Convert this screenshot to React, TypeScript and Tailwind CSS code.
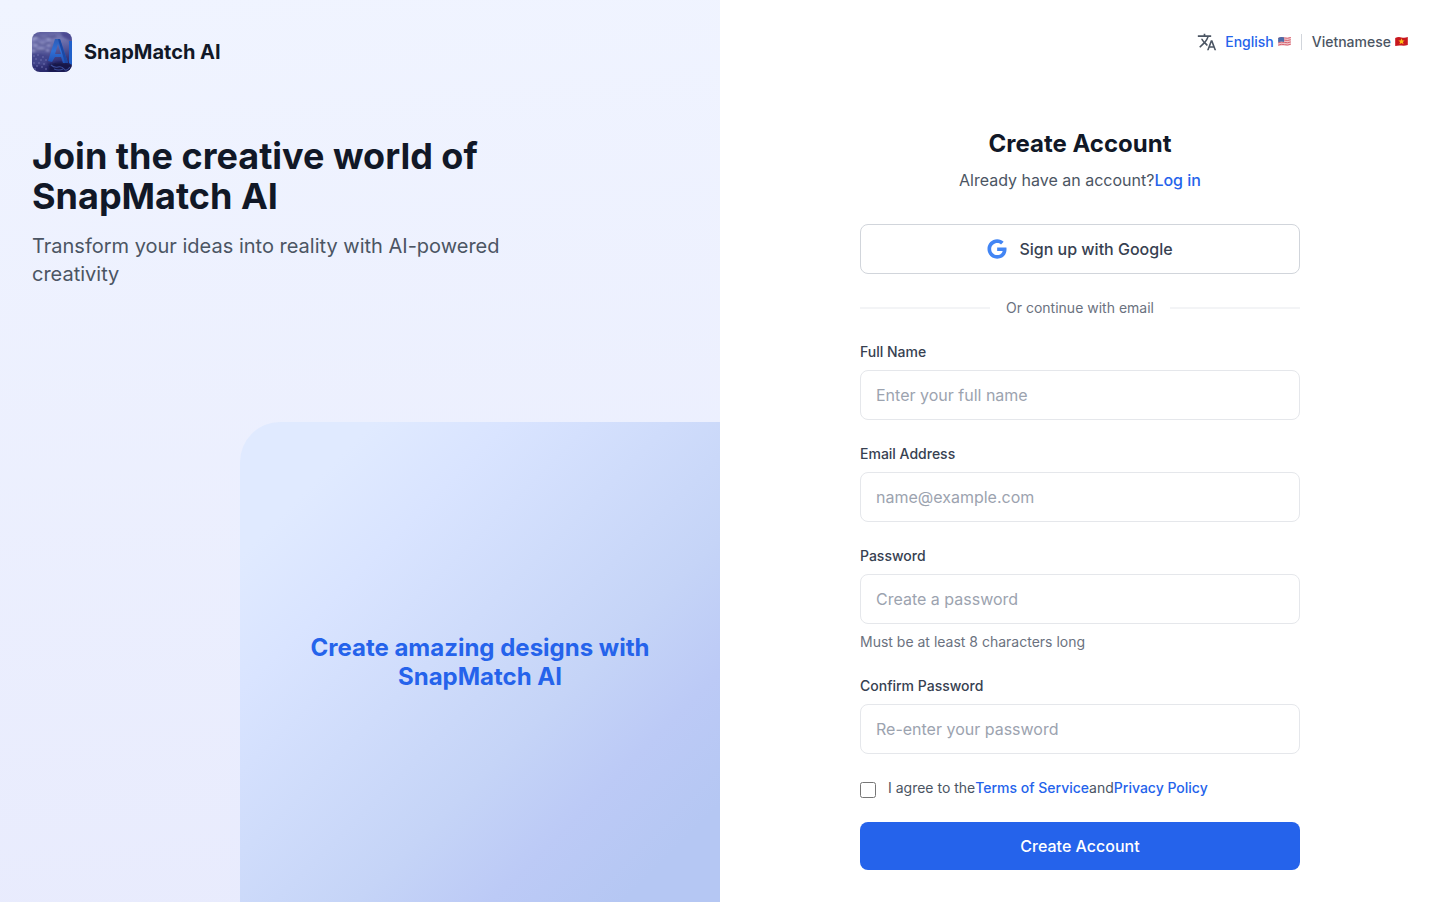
import { FaGoogle } from "react-icons/fa";
import { MdTranslate } from "react-icons/md";

function LogoMark() {
  return (
    <svg viewBox="0 0 40 40" className="size-10 shrink-0 rounded-lg" aria-hidden="true">
      <defs>
        <linearGradient id="sky" x1="0" y1="0" x2="0.2" y2="1">
          <stop offset="0" stopColor="#5a5a9c" />
          <stop offset="0.3" stopColor="#7678b2" />
          <stop offset="0.55" stopColor="#56589a" />
          <stop offset="0.8" stopColor="#34357a" />
          <stop offset="1" stopColor="#2a2a6c" />
        </linearGradient>
        <linearGradient id="letter" x1="0" y1="0" x2="0" y2="1">
          <stop offset="0" stopColor="#2c5cb8" />
          <stop offset="0.5" stopColor="#3070d6" />
          <stop offset="1" stopColor="#1f50b4" />
        </linearGradient>
        <filter id="soft">
          <feGaussianBlur stdDeviation="0.9" />
        </filter>
      </defs>
      <rect width="40" height="40" fill="url(#sky)" />
      <g filter="url(#soft)" fill="none">
        <path d="M0 8q9-6 18 0M2 14q8-5 16 0M0 19q10-5 17 0" stroke="#a6a8d6" strokeWidth="2" />
        <path d="M0 3q12 5 24 1M3 11q8 3 15 0M1 17q8 2 14 0" stroke="#50518f" strokeWidth="1.4" />
        <path d="M28 0h12v10l-9-5z" fill="#4c4a92" />
        <path d="M0 22q10-2 16 3l-2 8H0z" fill="#43448a" />
        <path d="M17 33q8-5 23-1v8H16z" fill="#15164a" />
      </g>
      <path
        d="M1 24h2M5 23h2M10 25h2M3 27h2M8 28h2M13 28h2M1 31h2M6 31h2M11 32h2M4 34h2M9 35h2M2 37h2M13 37h2"
        stroke="#6c6fab"
        strokeWidth="1.2"
      />
      <path
        d="M23 7h5l8 24h-5l-2-6h-6l-3 5-4-1zm3 5-3 10h6z"
        fill="url(#letter)"
        fillRule="evenodd"
      />
      <path d="M26 7h2l8 24h-3z" fill="#1b48a4" />
      <path d="M37 9h3v24l-3-2z" fill="#2060ca" />
      <path
        d="M19 33q3 3 7 2t6 2 6-2M22 37q5 2 9 0"
        stroke="#3b4c98"
        strokeWidth="1.2"
        fill="none"
      />
    </svg>
  );
}

function FlagUS() {
  return (
    <svg viewBox="0 0 14 10" className="mb-0.5 h-[9px] w-[13px]" aria-hidden="true">
      <path d="M0 1q3.500-1.500 7-.5t7-.5v9q-3.500 1-7 .5t-7 .5z" fill="#efc4ca" />
      <path
        d="M0 1.500q3.500-1.500 7-.5t7-.5M0 4q3.500-1.500 7-.5t7-.5M0 6.500q3.500-1.500 7-.5t7-.5M0 9q3.500-1.500 7-.5t7-.5"
        stroke="#d8616e"
        strokeWidth="1.1"
        fill="none"
      />
      <path d="M0 1q3.500-1.500 6.500-.5v5q-3-1-6.500.5z" fill="#4a6ba8" />
    </svg>
  );
}

function FlagVN() {
  return (
    <svg viewBox="0 0 14 10" className="mb-0.5 h-[9px] w-[13px]" aria-hidden="true">
      <path d="M0 1q3.500-1.500 7-.5t7-.5v9q-3.500 1-7 .5t-7 .5z" fill="#c8171e" />
      <path d="M7 1.500l1 2.400h2.500L8.500 5.500l.8 2.500L7 6.600 4.700 8l.8-2.500-2-1.600H6z" fill="#fbc116" />
    </svg>
  );
}

interface FieldProps {
  id: string;
  label: string;
  placeholder: string;
  type?: string;
  hint?: string;
}

function Field({ id, label, placeholder, type = "text", hint }: FieldProps) {
  return (
    <div className="flex flex-col gap-2">
      <label htmlFor={id} className="text-sm font-medium text-[#374151]">
        {label}
      </label>
      <input
        id={id}
        type={type}
        placeholder={placeholder}
        aria-describedby={hint ? `${id}-hint` : undefined}
        className="w-full rounded-lg border border-[#e5e7eb] bg-white px-[15px] py-3 text-base text-[#111827] placeholder:text-[#9ca3af]"
      />
      {hint && (
        <p id={`${id}-hint`} className="text-sm text-[#6b7280]">
          {hint}
        </p>
      )}
    </div>
  );
}

export default function App() {
  return (
    <div className="flex min-h-screen bg-white font-['Inter',sans-serif] text-[#111827]">
      <aside className="flex w-1/2 flex-col bg-[linear-gradient(176deg,#f0f4ff_0%,#e8ebfd_100%)]">
        <div className="p-8">
          <div className="flex items-center gap-3">
            <LogoMark />
            <span className="text-xl font-bold">SnapMatch AI</span>
          </div>
          <h1 className="mt-16 max-w-lg text-4xl font-bold">
            Join the creative world of SnapMatch AI
          </h1>
          <p className="mt-4 max-w-lg text-xl text-[#4b5563]">
            Transform your ideas into reality with AI-powered creativity
          </p>
        </div>
        <div className="mt-auto flex aspect-square w-2/3 items-center justify-center self-end rounded-tl-[40px] bg-[linear-gradient(135deg,#e0eaff_14%,#d9e4ff_28%,#c5d4f7_62%,#bccaf6_76%,#b5c7f3_90%)] px-8">
          <p className="text-center text-2xl leading-[29px] font-bold text-[#2563eb]">
            Create amazing designs with SnapMatch AI
          </p>
        </div>
      </aside>

      <main className="flex w-1/2 flex-col p-8">
        <nav
          aria-label="Language"
          className="flex items-center justify-end gap-2 text-sm font-medium text-[#4b5563]"
        >
          <MdTranslate className="size-5" aria-hidden="true" />
          <button type="button" className="flex items-center gap-1 text-[#2563eb]">
            English <FlagUS />
          </button>
          <span className="mx-0.5 h-4 w-px bg-[#d1d5db]" />
          <button type="button" className="flex items-center gap-1">
            Vietnamese <FlagVN />
          </button>
        </nav>

        <div className="mx-auto mt-auto w-full max-w-[440px] pt-12">
          <h2 className="text-center text-2xl font-bold">Create Account</h2>
          <p className="mt-2 text-center text-base text-[#4b5563]">
            Already have an account?
            <a href="#login" className="font-medium text-[#2563eb]">
              Log in
            </a>
          </p>

          <button
            type="button"
            className="mt-8 flex w-full items-center justify-center gap-3 rounded-lg border border-[#d1d5db] bg-white py-3 text-base font-medium text-[#374151]"
          >
            <FaGoogle className="size-5 text-[#4285f4]" aria-hidden="true" />
            Sign up with Google
          </button>

          <div className="my-6 flex items-center gap-4">
            <span className="h-0.5 flex-1 bg-[#f3f4f6]" />
            <span className="text-sm text-[#6b7280]">Or continue with email</span>
            <span className="h-0.5 flex-1 bg-[#f3f4f6]" />
          </div>

          <form className="flex flex-col gap-6" onSubmit={(event) => event.preventDefault()}>
            <Field id="full-name" label="Full Name" placeholder="Enter your full name" />
            <Field id="email" label="Email Address" type="email" placeholder="name@example.com" />
            <Field
              id="password"
              label="Password"
              type="password"
              placeholder="Create a password"
              hint="Must be at least 8 characters long"
            />
            <Field
              id="confirm-password"
              label="Confirm Password"
              type="password"
              placeholder="Re-enter your password"
            />

            <div className="flex items-start gap-3">
              <input id="terms" type="checkbox" className="mt-1 size-4" />
              <label htmlFor="terms" className="text-sm text-[#4b5563]">
                I agree to the
                <a href="#terms-of-service" className="font-medium text-[#2563eb]">
                  Terms of Service
                </a>
                and
                <a href="#privacy" className="font-medium text-[#2563eb]">
                  Privacy Policy
                </a>
              </label>
            </div>

            <button
              type="submit"
              className="w-full rounded-lg bg-[#2563eb] py-3 text-base font-medium text-white"
            >
              Create Account
            </button>
          </form>
        </div>
      </main>
    </div>
  );
}
